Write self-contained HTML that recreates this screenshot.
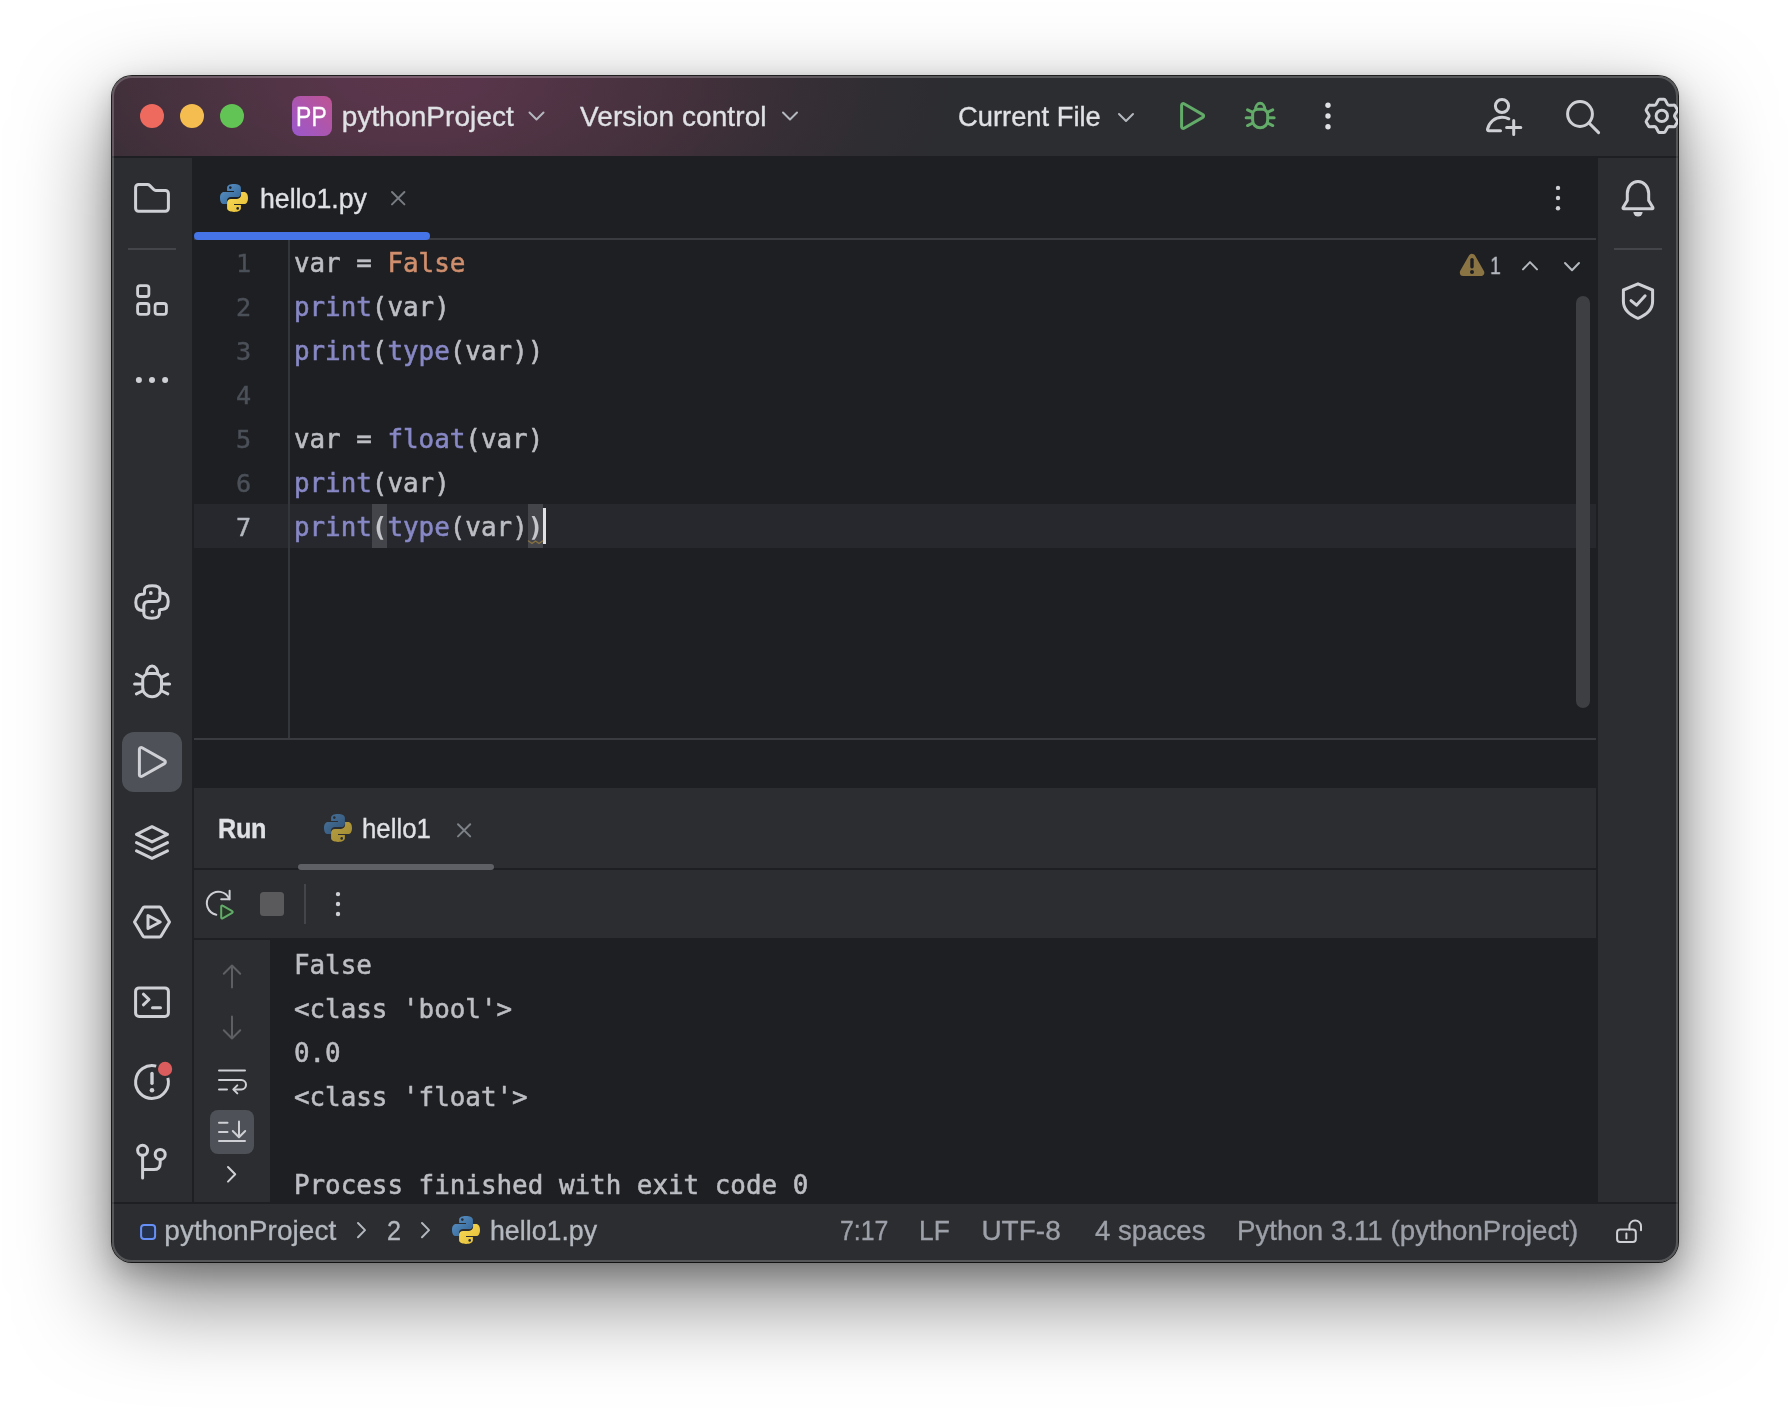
<!DOCTYPE html>
<html lang="en">
<head>
<meta charset="utf-8">
<title>pythonProject – hello1.py</title>
<style>
html,body{margin:0;padding:0;}
body{width:1790px;height:1410px;background:#fff;overflow:hidden;position:relative;
  font-family:"Liberation Sans","DejaVu Sans",sans-serif;}
.shadow{position:absolute;left:112px;top:76px;width:1566px;height:1186px;border-radius:20px;
  box-shadow:0 0 0 1px rgba(0,0,0,.85), 0 36px 92px rgba(0,0,0,.5), 0 12px 28px rgba(0,0,0,.22), 0 0 5px rgba(0,0,0,.1);}
.win{position:absolute;left:112px;top:76px;width:1566px;height:1186px;border-radius:20px;overflow:hidden;background:#1e1f22;}
.in{position:absolute;left:-112px;top:-76px;width:1790px;height:1410px;will-change:transform;}
.abs{position:absolute;}
.tx{font-family:"Liberation Sans","DejaVu Sans",sans-serif;white-space:pre;-webkit-text-stroke:0.35px;}
.mono{font-family:"DejaVu Sans Mono","Liberation Mono",monospace;font-size:25.9px;white-space:pre;color:#bcbec4;line-height:44px;height:44px;-webkit-text-stroke:0.55px;}
.lnum{font-family:"DejaVu Sans Mono","Liberation Mono",monospace;font-size:25.2px;line-height:44px;height:44px;width:51.2px;text-align:right;-webkit-text-stroke:0.45px;}
.titlebar{left:112px;top:76px;width:1566px;height:80px;background:#2b2d30;}
.titlegrad{left:112px;top:76px;width:1000px;height:80px;
  background:radial-gradient(ellipse 580px 280px at 298px 0px,#5b364b 0%,#58354a 12%,#4c3342 33%,#42303b 50%,#3a2f37 61%,#2f2d32 81%,#2b2d30 100%);}
.panel{background:#2b2d30;}
.kw{color:#cf8e6d;}
.bi{color:#8888c6;}
.mb{font-weight:bold;-webkit-text-stroke:0;color:#c4c6cc;}
.frame{position:absolute;left:112px;top:76px;width:1566px;height:1186px;border-radius:20px;box-sizing:border-box;border:2px solid rgba(255,255,255,.2);pointer-events:none;}
</style>
</head>
<body>
<div class="shadow"></div>
<div class="win"><div class="in">

<!-- title bar -->
<div class="abs titlebar"></div>
<div class="abs titlegrad"></div>

<!-- panels -->
<div class="abs panel" style="left:112px;top:158px;width:80px;height:1044px;"></div>
<div class="abs panel" style="left:1598px;top:158px;width:80px;height:1044px;"></div>
<div class="abs panel" style="left:194px;top:788px;width:1402px;height:80px;"></div>
<div class="abs panel" style="left:194px;top:870px;width:1402px;height:68px;"></div>
<div class="abs panel" style="left:194px;top:940px;width:76px;height:262px;"></div>
<div class="abs panel" style="left:112px;top:1204px;width:1566px;height:58px;"></div>

<!-- editor lines / highlights -->
<div class="abs" style="left:194px;top:238px;width:1402px;height:2px;background:#393b40;"></div>
<div class="abs" style="left:194px;top:232px;width:236px;height:8px;border-radius:4px;background:#4474e8;"></div>
<div class="abs" style="left:194px;top:504px;width:1402px;height:44px;background:#26282e;"></div>
<div class="abs" style="left:288px;top:240px;width:2px;height:498px;background:#33363a;"></div>
<div class="abs" style="left:194px;top:738px;width:1402px;height:2px;background:#393b40;"></div>
<div class="abs" style="left:372px;top:504px;width:15px;height:44px;background:#43454a;"></div>
<div class="abs" style="left:528px;top:504px;width:15px;height:44px;background:#43454a;"></div>
<div class="abs" style="left:543px;top:508px;width:3.4px;height:36px;background:#dfe1e5;"></div>
<div class="abs" style="left:1576px;top:296px;width:14px;height:412px;border-radius:7px;background:#3d3f43;"></div>
<!-- run tab underline -->
<div class="abs" style="left:298px;top:864px;width:196px;height:6px;border-radius:3px;background:#5e6066;"></div>
<!-- sidebar separators -->
<div class="abs" style="left:128px;top:248px;width:48px;height:2px;background:#43454a;"></div>
<div class="abs" style="left:1614px;top:248px;width:48px;height:2px;background:#43454a;"></div>
<div class="abs" style="left:304px;top:884px;width:2px;height:40px;background:#43454a;"></div>
<!-- selected backgrounds -->
<div class="abs" style="left:122px;top:732px;width:60px;height:60px;border-radius:12px;background:#4e5157;"></div>
<div class="abs" style="left:210px;top:1110px;width:44px;height:44px;border-radius:8px;background:#4e5157;"></div>

<svg class="abs" style="left:0;top:0" width="1790" height="1410" viewBox="0 0 1790 1410" fill="none" stroke-linecap="round" stroke-linejoin="round">
<defs>
<linearGradient id="pp" x1="0" y1="1" x2="1" y2="0"><stop offset="0" stop-color="#9a58cc"/><stop offset="1" stop-color="#bf5492"/></linearGradient>
<linearGradient id="pyb" x1="0" y1="0" x2="1" y2="1"><stop offset="0" stop-color="#5d96cc"/><stop offset="1" stop-color="#30608f"/></linearGradient>
<linearGradient id="pyy" x1="0" y1="0" x2="1" y2="1"><stop offset="0" stop-color="#fbdc5a"/><stop offset="1" stop-color="#e3bd35"/></linearGradient>
<linearGradient id="pybd" x1="0" y1="0" x2="1" y2="1"><stop offset="0" stop-color="#4b749c"/><stop offset="1" stop-color="#2f5275"/></linearGradient>
<linearGradient id="pyyd" x1="0" y1="0" x2="1" y2="1"><stop offset="0" stop-color="#b59e45"/><stop offset="1" stop-color="#a38a30"/></linearGradient>
</defs>

<!-- traffic lights -->
<circle cx="152" cy="116" r="12" fill="#ee6a5f"/>
<circle cx="192" cy="116" r="12" fill="#f5bd4f"/>
<circle cx="232" cy="116" r="12" fill="#61c454"/>

<!-- project badge -->
<rect x="292" y="96" width="40" height="40" rx="8" fill="url(#pp)"/>

<!-- title chevrons -->
<g stroke="#b4b8bf" stroke-width="2">
<path d="M529.5 112.5l7 7 7-7"/>
<path d="M783 112.5l7 7 7-7"/>
<path d="M1119 114l7 7 7-7"/>
</g>

<!-- run / debug (green) -->
<g stroke="#62ab68" stroke-width="3">
<path d="M1181.600 105.200v21.600a1.600 1.600 0 0 0 2.400 1.400l18.800-10.800a1.600 1.600 0 0 0 0-2.800l-18.800-10.800a1.600 1.600 0 0 0-2.400 1.400z"/>
<g transform="translate(1260.150 115.600) scale(0.8) translate(-152.100 -681.450)" stroke-width="3.750">
<path d="M142.700 687.400V680.100a6.500 6.500 0 0 1 6.500-6.500h5.800a6.500 6.500 0 0 1 6.500 6.500v7.300a9.400 9.400 0 0 1-18.800 0z"/>
<path d="M146.400 673.600a5.700 7.500 0 0 1 11.400 0"/>
<path d="M136.400 674.200L142.300 677.200M167.800 674.200L161.900 677.200M134.600 684H142M169.600 684H162.200M136.400 693.900L142.300 691M167.800 693.900L161.900 691"/>
</g>
</g>
<g fill="#dfe1e5"><circle cx="1328" cy="105.300" r="2.700"/><circle cx="1328" cy="116" r="2.700"/><circle cx="1328" cy="126.700" r="2.700"/></g>

<!-- add user, search, gear -->
<g stroke="#ced0d6" stroke-width="3">
<circle cx="1502" cy="106" r="6.600"/>
<path d="M1500.500 130.800h-11.700c-.9 0-1.500-.8-1.300-1.600 1.700-7 7.200-12 14.500-12 2.500 0 4.800.6 6.800 1.600"/>
<path d="M1506.600 127.500h14.200M1513.700 120.400v14.200"/>
<circle cx="1580" cy="114" r="12.400"/>
<path d="M1589 123l9.600 9.600"/>
<circle cx="1661.800" cy="115.900" r="5.700"/>
<path d="M1665.3 100.1Q1664.9 99.3 1664.0 99.3L1659.6 99.3Q1658.7 99.3 1658.3 100.1L1656.2 104.1Q1655.6 105.2 1654.4 105.2L1649.8 105.0Q1648.9 104.9 1648.5 105.7L1646.3 109.5Q1645.9 110.3 1646.4 111.0L1648.8 114.8Q1649.5 115.9 1648.8 117.0L1646.4 120.8Q1645.9 121.5 1646.3 122.3L1648.5 126.1Q1648.9 126.9 1649.8 126.8L1654.4 126.6Q1655.6 126.6 1656.2 127.7L1658.3 131.7Q1658.7 132.5 1659.6 132.5L1664.0 132.5Q1664.9 132.5 1665.3 131.7L1667.4 127.7Q1668.0 126.6 1669.2 126.6L1673.8 126.8Q1674.7 126.9 1675.1 126.1L1677.3 122.3Q1677.7 121.5 1677.2 120.8L1674.8 117.0Q1674.1 115.9 1674.8 114.8L1677.2 111.0Q1677.7 110.3 1677.3 109.5L1675.1 105.7Q1674.7 104.9 1673.8 105.0L1669.2 105.2Q1668.0 105.2 1667.4 104.1Z"/>
</g>

<!-- left sidebar -->
<g stroke="#ced0d6" stroke-width="3">
<path d="M135.600 208.300V187.500a3 3 0 0 1 3-3h8.900a3 3 0 0 1 2.100.9l4.100 4.100a3 3 0 0 0 2.100.9h9.600a3 3 0 0 1 3 3v14.900a3 3 0 0 1-3 3h-26.800a3 3 0 0 1-3-3z"/>
<rect x="137.600" y="285.700" width="11.300" height="10.800" rx="2.600" stroke-width="2.800"/>
<rect x="137.600" y="303.500" width="11.300" height="10.800" rx="2.600" stroke-width="2.800"/>
<rect x="155.100" y="303.500" width="11.300" height="10.800" rx="2.600" stroke-width="2.800"/>
<!-- python outline -->
<g transform="translate(127 577)">
<path d="M17.500 13c0-3 2.500-4.300 7.700-4.300s7.700 1.300 7.700 4.300v3.300h2.100c4 0 6.200 3.200 6.200 8.200s-2.200 7.900-6.200 7.900h-1.100q-1.500 0-1.500 1.500v2.600c0 3-2.400 4.700-7.600 4.700s-8-1.700-8-4.700v-3.100h-1.300c-4.400 0-6.700-2.900-6.700-8s2.300-8.200 6.200-8.200h1q1.500 0 1.500-1.500z"/>
<path d="M32.900 16.300v3.700c0 3-1.900 4.600-4.900 4.600h-6.500c-3 0-4.700 1.900-4.700 4.900v3.900"/>
</g>
<!-- bug -->
<path d="M142.700 687.400V680.100a6.500 6.500 0 0 1 6.500-6.500h5.800a6.500 6.500 0 0 1 6.500 6.500v7.300a9.400 9.400 0 0 1-18.800 0z"/>
<path d="M146.400 673.600a5.700 7.500 0 0 1 11.400 0"/>
<path d="M136.400 674.200L142.300 677.200M167.800 674.200L161.900 677.200M134.600 684H142M169.600 684H162.200M136.400 693.900L142.300 691M167.800 693.900L161.900 691"/>
<!-- run tool window -->
<path d="M139.400 749.300v25.400a1.800 1.800 0 0 0 2.700 1.600l22.300-12.700a1.800 1.800 0 0 0 0-3.200l-22.300-12.700a1.800 1.800 0 0 0-2.700 1.600z"/>
<!-- layers -->
<path d="M152 826.700l15.500 7.600-15.500 7.600-15.500-7.600z"/>
<path d="M136.500 842.600l15.500 7.600 15.500-7.600"/>
<path d="M136.500 850.800l15.500 7.600 15.500-7.600"/>
<!-- services -->
<path d="M134.500 922l8.400-14.100a1.800 1.800 0 0 1 1.500-.9h15.200a1.800 1.800 0 0 1 1.500.9l8.400 14.100-8.400 14.100a1.800 1.800 0 0 1-1.500.9h-15.200a1.800 1.800 0 0 1-1.500-.9z"/>
<path d="M148 915.500v13l12.200-6.500z"/>
<!-- terminal -->
<rect x="135.600" y="987.900" width="32.800" height="28.500" rx="3.500"/>
<path d="M143.400 994.200l5.600 5.300-5.600 5.300M152.500 1007.700h8"/>
<!-- problems -->
<path d="M156.220 1066.160A16.400 16.400 0 1 0 167.840 1077.780" stroke-linecap="butt"/>
<path d="M152 1073.500v9.800" stroke-width="3.400"/>
<!-- git -->
<circle cx="142.600" cy="1150.300" r="5"/>
<circle cx="160.200" cy="1154.400" r="5"/>
<path d="M142.600 1155.800v22.200M160.200 1159.900v3.300q0 6.400-6.400 6.400h-11"/>
</g>
<g fill="#ced0d6">
<circle cx="138.900" cy="380" r="3"/><circle cx="152" cy="380" r="3"/><circle cx="165.100" cy="380" r="3"/>
<circle cx="150.800" cy="593" r="1.900"/><circle cx="152.400" cy="611.600" r="1.900"/>
<circle cx="152" cy="1090.200" r="2.300"/>
</g>
<circle cx="165.100" cy="1068.900" r="7.100" fill="#db5c5c"/>

<!-- right sidebar: bell, shield -->
<g stroke="#ced0d6" stroke-width="3">
<path d="M1627.300 193.500a10.700 12 0 0 1 21.400 0v7l4.200 7.100a.8.800 0 0 1-.7 1.200h-28.400a.8.800 0 0 1-.7-1.200l4.200-7.100z"/>
<path d="M1638 283.800l14.600 6.200v11.500c0 8.500-6.500 13.500-14.600 16.800-8.100-3.300-14.600-8.300-14.600-16.800v-11.500z"/>
<path d="M1631 300.600l5.500 4.600 8.600-9.400"/>
</g>
<path d="M1633.400 212h9.200a4.600 4.600 0 0 1-9.200 0z" fill="#ced0d6"/>

<!-- editor tab: python icon, close, dots -->
<g transform="translate(220 184)">
<path fill="url(#pyb)" d="M13.900 0C10.300 0 7.100 1 7.100 3.900V6.900H14V7.900H4C1.400 7.900 0 10.200 0 14S1.400 20.100 4 20.100H6.900V16.900C6.900 14.500 8.800 13.100 11 13.100H17C19.200 13.100 20.900 11.500 20.900 9.400V3.900C20.900 1.400 18 0 13.900 0Z"/>
<path fill="url(#pyy)" d="M14.100 28C17.700 28 20.900 27 20.900 24.100V21.100H14V20.100H24C26.600 20.100 28 17.800 28 14S26.600 7.900 24 7.900H21.100V11.100C21.100 13.500 19.200 14.900 17 14.900H11C8.800 14.900 7.100 16.500 7.100 18.600V24.100C7.100 26.600 10 28 14.100 28Z"/>
<circle cx="10.300" cy="3.600" r="1.300" fill="#1e1f22"/><circle cx="17.700" cy="24.400" r="1.300" fill="#1e1f22"/>
</g>
<path d="M392 192l12.400 12.400M404.400 192l-12.400 12.400" stroke="#787c83" stroke-width="2"/>
<g fill="#ced0d6"><circle cx="1558" cy="187.900" r="2.200"/><circle cx="1558" cy="198" r="2.200"/><circle cx="1558" cy="208.200" r="2.200"/></g>

<!-- inspection widget -->
<path d="M1472 257.300L1480.700 272.600H1463.300Z" fill="#8a7444" stroke="#8a7444" stroke-width="7"/>
<path d="M1472 259.600v7.200" stroke="#1e1f22" stroke-width="3.400"/>
<circle cx="1472" cy="272" r="2" fill="#1e1f22"/>
<g stroke="#b4b8bf" stroke-width="2"><path d="M1523 269.400l7-7.300 7 7.300"/><path d="M1565 263l7 7.300 7-7.300"/></g>
<!-- weak warning squiggle -->
<path d="M528.500 541l3.500 2.500 3.500-2.500 3.500 2.500 3.500-2.500" stroke="#857042" stroke-width="1.500"/>

<!-- run tab -->
<g transform="translate(324 814)">
<path fill="url(#pybd)" d="M13.900 0C10.300 0 7.100 1 7.100 3.900V6.900H14V7.900H4C1.400 7.900 0 10.200 0 14S1.400 20.100 4 20.100H6.900V16.900C6.900 14.500 8.800 13.100 11 13.100H17C19.200 13.100 20.900 11.500 20.900 9.400V3.900C20.900 1.400 18 0 13.900 0Z"/>
<path fill="url(#pyyd)" d="M14.100 28C17.700 28 20.900 27 20.900 24.100V21.100H14V20.100H24C26.600 20.100 28 17.800 28 14S26.600 7.900 24 7.900H21.100V11.100C21.100 13.500 19.200 14.900 17 14.900H11C8.800 14.900 7.100 16.500 7.100 18.600V24.100C7.100 26.600 10 28 14.100 28Z"/>
<circle cx="10.300" cy="3.600" r="1.300" fill="#2b2d30"/><circle cx="17.700" cy="24.400" r="1.300" fill="#2b2d30"/>
</g>
<path d="M458 824.200l12.200 12.200M470.200 824.200l-12.200 12.200" stroke="#7d8188" stroke-width="2"/>

<!-- run toolbar -->
<g stroke="#ced0d6" stroke-width="2">
<path d="M229.300 899.200a11.600 11.600 0 1 0-13 15.500"/>
<path d="M229.600 890.800v8.400h-8.400"/>
</g>
<path d="M221.200 906.500v11.100a.9.900 0 0 0 1.400.8l9.600-5.600a.9.900 0 0 0 0-1.600l-9.600-5.600a.9.900 0 0 0-1.400.8z" fill="#253627" stroke="#62ab68" stroke-width="2"/>
<rect x="260" y="892" width="24" height="24" rx="3.500" fill="#5a5a5c"/>
<g fill="#ced0d6"><circle cx="338" cy="894.100" r="2.200"/><circle cx="338" cy="904" r="2.200"/><circle cx="338" cy="914" r="2.200"/></g>

<!-- console gutter -->
<g stroke="#5e5f63" stroke-width="2">
<path d="M232 987.500v-22M223.800 973.700l8.200-8.200 8.200 8.200"/>
<path d="M232 1016.500v22M223.800 1030.300l8.200 8.200 8.200-8.200"/>
</g>
<g stroke="#ced0d6" stroke-width="2">
<path d="M219 1070.600h26M219 1080h22.300a4.700 4.700 0 0 1 0 9.400h-7.300M219 1089.400h8"/>
<path d="M237.300 1085.400l-4 4 4 4"/>
<path d="M219 1122.700h8.500M219 1132h8.500M219 1141h26"/>
<path d="M239 1121.500v15M232.800 1131l6.200 6.200 6.200-6.200"/>
<path d="M228 1167l7.200 7.300-7.200 7.300"/>
</g>

<!-- status bar -->
<rect x="141.100" y="1225.100" width="14" height="14" rx="3" fill="#25324d" stroke="#6790f7" stroke-width="2"/>
<g stroke="#b4b8bf" stroke-width="2"><path d="M358 1223l7 7.100-7 7.100"/><path d="M422 1223l7 7.100-7 7.100"/></g>
<g transform="translate(452 1216)">
<path fill="url(#pyb)" d="M13.900 0C10.300 0 7.100 1 7.100 3.900V6.900H14V7.900H4C1.400 7.900 0 10.200 0 14S1.400 20.100 4 20.100H6.900V16.900C6.900 14.500 8.800 13.100 11 13.100H17C19.200 13.100 20.900 11.500 20.900 9.400V3.900C20.900 1.400 18 0 13.900 0Z"/>
<path fill="url(#pyy)" d="M14.100 28C17.700 28 20.900 27 20.900 24.100V21.100H14V20.100H24C26.600 20.100 28 17.800 28 14S26.600 7.900 24 7.900H21.100V11.100C21.100 13.500 19.200 14.900 17 14.900H11C8.800 14.900 7.100 16.500 7.100 18.600V24.100C7.100 26.600 10 28 14.100 28Z"/>
<circle cx="10.300" cy="3.600" r="1.300" fill="#2b2d30"/><circle cx="17.700" cy="24.400" r="1.300" fill="#2b2d30"/>
</g>
<g stroke="#ced0d6" stroke-width="2">
<rect x="1617.100" y="1229.600" width="18.700" height="12.500" rx="3"/>
<path d="M1629.400 1229.600v-3.400a5.800 5.800 0 0 1 11.600 0v4M1626.400 1233.500v5"/>
</g>
</svg>

<span class="abs tx" style="left:341.80px;top:102.80px;font-size:28px;line-height:28px;color:#dfe1e5;font-weight:400;letter-spacing:0.072px;">pythonProject</span>
<span class="abs tx" style="left:580.00px;top:102.80px;font-size:28px;line-height:28px;color:#dfe1e5;font-weight:400;letter-spacing:0.093px;">Version control</span>
<span class="abs tx" style="left:957.82px;top:102.80px;font-size:28px;line-height:28px;color:#dfe1e5;font-weight:400;letter-spacing:0.000px;transform:scaleX(0.9759);transform-origin:0 0;">Current File</span>
<span class="abs tx" style="left:260.15px;top:185.40px;font-size:28px;line-height:28px;color:#dfe1e5;font-weight:400;letter-spacing:0.000px;transform:scaleX(0.9533);transform-origin:0 0;">hello1.py</span>
<span class="abs tx" style="left:1490.15px;top:255.10px;font-size:23px;line-height:23px;color:#b4b8bf;font-weight:400;letter-spacing:0.000px;transform:scaleX(0.8500);transform-origin:0 0;">1</span>
<span class="abs tx" style="left:296.12px;top:103.20px;font-size:27.2px;line-height:27.2px;color:#ffffff;font-weight:400;letter-spacing:0.438px;transform:scaleX(0.8400);transform-origin:0 0;">PP</span>
<span class="abs tx" style="left:218.10px;top:814.90px;font-size:28px;line-height:28px;color:#dfe1e5;font-weight:700;letter-spacing:-0.329px;transform:scaleX(0.9000);transform-origin:0 0;">Run</span>
<span class="abs tx" style="left:362.08px;top:814.90px;font-size:28px;line-height:28px;color:#dfe1e5;font-weight:400;letter-spacing:0.000px;transform:scaleX(0.9227);transform-origin:0 0;">hello1</span>
<span class="abs tx" style="left:164.30px;top:1216.70px;font-size:28px;line-height:28px;color:#b4b8bf;font-weight:400;letter-spacing:0.064px;">pythonProject</span>
<span class="abs tx" style="left:386.60px;top:1216.70px;font-size:28px;line-height:28px;color:#b4b8bf;font-weight:400;letter-spacing:0.000px;transform:scaleX(0.9000);transform-origin:0 0;">2</span>
<span class="abs tx" style="left:490.04px;top:1216.70px;font-size:28px;line-height:28px;color:#b4b8bf;font-weight:400;letter-spacing:0.000px;transform:scaleX(0.9551);transform-origin:0 0;">hello1.py</span>
<span class="abs tx" style="left:840.01px;top:1216.70px;font-size:28px;line-height:28px;color:#9da0a8;font-weight:400;letter-spacing:0.000px;transform:scaleX(0.8881);transform-origin:0 0;">7:17</span>
<span class="abs tx" style="left:919.21px;top:1216.70px;font-size:28px;line-height:28px;color:#9da0a8;font-weight:400;letter-spacing:0.000px;transform:scaleX(0.9435);transform-origin:0 0;">LF</span>
<span class="abs tx" style="left:981.40px;top:1216.70px;font-size:28px;line-height:28px;color:#9da0a8;font-weight:400;letter-spacing:0.012px;">UTF-8</span>
<span class="abs tx" style="left:1095.10px;top:1216.70px;font-size:28px;line-height:28px;color:#9da0a8;font-weight:400;letter-spacing:0.000px;transform:scaleX(0.9859);transform-origin:0 0;">4 spaces</span>
<span class="abs tx" style="left:1237.02px;top:1216.70px;font-size:28px;line-height:28px;color:#9da0a8;font-weight:400;letter-spacing:0.000px;transform:scaleX(0.9892);transform-origin:0 0;">Python 3.11 (pythonProject)</span>
<div class="abs lnum" style="left:200px;top:242.1px;color:#4b5059;">1</div>
<div class="abs mono" style="left:293.9px;top:240.7px;">var = <span class="kw">False</span></div>
<div class="abs lnum" style="left:200px;top:286.1px;color:#4b5059;">2</div>
<div class="abs mono" style="left:293.9px;top:284.7px;"><span class="bi">print</span>(var)</div>
<div class="abs lnum" style="left:200px;top:330.1px;color:#4b5059;">3</div>
<div class="abs mono" style="left:293.9px;top:328.7px;"><span class="bi">print</span>(<span class="bi">type</span>(var))</div>
<div class="abs lnum" style="left:200px;top:374.1px;color:#4b5059;">4</div>
<div class="abs lnum" style="left:200px;top:418.1px;color:#4b5059;">5</div>
<div class="abs mono" style="left:293.9px;top:416.7px;">var = <span class="bi">float</span>(var)</div>
<div class="abs lnum" style="left:200px;top:462.1px;color:#4b5059;">6</div>
<div class="abs mono" style="left:293.9px;top:460.7px;"><span class="bi">print</span>(var)</div>
<div class="abs lnum" style="left:200px;top:506.1px;color:#b4b8bf;">7</div>
<div class="abs mono" style="left:293.9px;top:504.7px;"><span class="bi">print</span><span class="mb">(</span><span class="bi">type</span>(var)<span class="mb">)</span></div>
<div class="abs mono" style="left:293.9px;top:942.6px;">False</div>
<div class="abs mono" style="left:293.9px;top:986.6px;">&lt;class 'bool'&gt;</div>
<div class="abs mono" style="left:293.9px;top:1030.6px;">0.0</div>
<div class="abs mono" style="left:293.9px;top:1074.6px;">&lt;class 'float'&gt;</div>
<div class="abs mono" style="left:293.9px;top:1162.6px;">Process finished with exit code 0</div>

</div></div>
<div class="frame"></div>
</body>
</html>
